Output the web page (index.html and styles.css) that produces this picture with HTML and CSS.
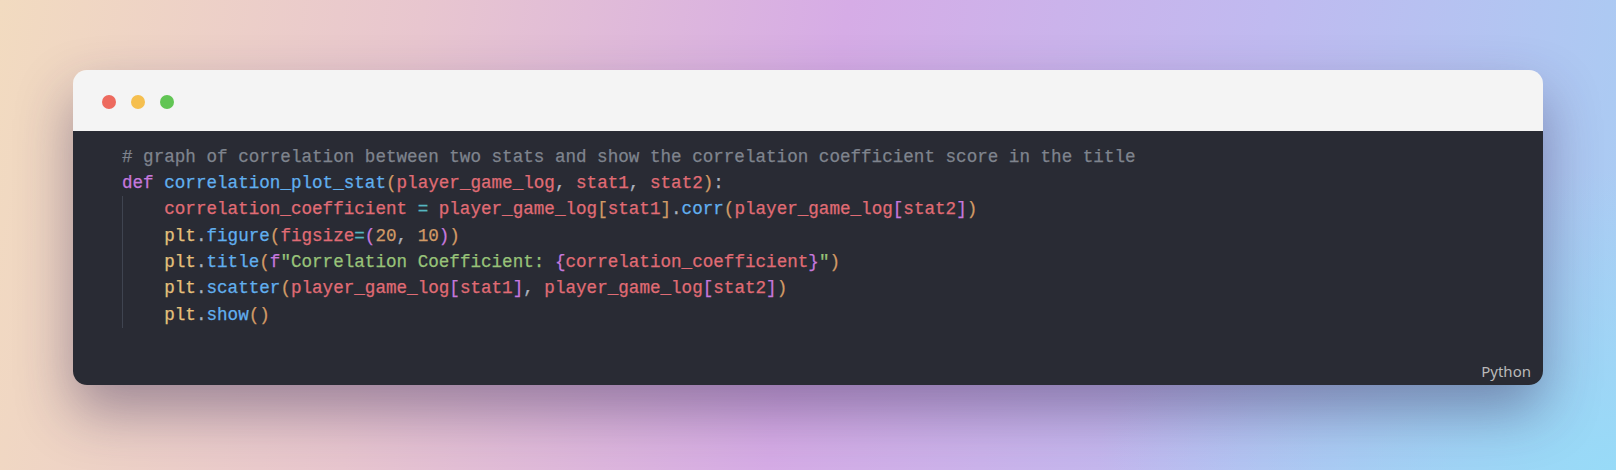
FILE: index.html
```html
<!DOCTYPE html>
<html lang="en">
<head>
<meta charset="utf-8">
<title>Code snippet</title>
<link rel="stylesheet" href="styles.css">
</head>
<body>
<div class="stage">
  <div class="window">
    <div class="titlebar">
      <span class="dot red"></span>
      <span class="dot yellow"></span>
      <span class="dot green"></span>
    </div>
    <div class="code-area">
      <pre class="code"><div class="line"><span class="c"># graph of correlation between two stats and show the correlation coefficient score in the title</span></div><div class="line"><span class="k">def</span> <span class="fn">correlation_plot_stat</span><span class="b1">(</span><span class="v">player_game_log</span><span class="p">,</span> <span class="v">stat1</span><span class="p">,</span> <span class="v">stat2</span><span class="b1">)</span><span class="p">:</span></div><div class="block"><div class="line"><span class="v">correlation_coefficient</span> <span class="op">=</span> <span class="v">player_game_log</span><span class="b1">[</span><span class="v">stat1</span><span class="b1">]</span><span class="p">.</span><span class="fn">corr</span><span class="b1">(</span><span class="v">player_game_log</span><span class="b2">[</span><span class="v">stat2</span><span class="b2">]</span><span class="b1">)</span></div><div class="line"><span class="m">plt</span><span class="p">.</span><span class="fn">figure</span><span class="b1">(</span><span class="v">figsize</span><span class="op">=</span><span class="b2">(</span><span class="n">20</span><span class="p">,</span> <span class="n">10</span><span class="b2">)</span><span class="b1">)</span></div><div class="line"><span class="m">plt</span><span class="p">.</span><span class="fn">title</span><span class="b1">(</span><span class="k">f</span><span class="s">"Correlation Coefficient: </span><span class="b2">{</span><span class="v">correlation_coefficient</span><span class="b2">}</span><span class="s">"</span><span class="b1">)</span></div><div class="line"><span class="m">plt</span><span class="p">.</span><span class="fn">scatter</span><span class="b1">(</span><span class="v">player_game_log</span><span class="b2">[</span><span class="v">stat1</span><span class="b2">]</span><span class="p">,</span> <span class="v">player_game_log</span><span class="b2">[</span><span class="v">stat2</span><span class="b2">]</span><span class="b1">)</span></div><div class="line"><span class="m">plt</span><span class="p">.</span><span class="fn">show</span><span class="b1">()</span></div></div></pre>
      <div class="lang">Python</div>
    </div>
  </div>
</div>
</body>
</html>
```

FILE: styles.css
```css
* { box-sizing: border-box; }

html, body {
  margin: 0;
  padding: 0;
  width: 1616px;
  height: 470px;
  overflow: hidden;
}

body {
  background:
    radial-gradient(ellipse 520px 300px at 1616px 470px, rgba(150, 220, 248, 0.9), rgba(150, 220, 248, 0) 100%),
    linear-gradient(100deg, #f2dbc0 0%, #e8c6cf 25%, #d6ace6 50%, #c0baf0 75%, #a8cdf3 100%);
  font-family: "Noto Sans", "Open Sans", sans-serif;
}

.stage {
  padding: 70px 73px 0 73px;
}

.window {
  width: 1470px;
  border-radius: 14px;
  overflow: hidden;
  box-shadow: 0 26px 55px rgba(50, 35, 80, 0.42);
}

.titlebar {
  height: 61px;
  background: #f4f4f4;
  display: flex;
  align-items: center;
  gap: 15px;
  padding-left: 29px;
  padding-top: 2px;
}

.dot {
  width: 14px;
  height: 14px;
  border-radius: 50%;
  display: block;
}
.red { background: #ed6a5e; }
.yellow { background: #f5bf4f; }
.green { background: #61c554; }

.code-area {
  height: 254px;
  background: #292b34;
  display: flex;
  flex-direction: column;
}

.code {
  margin: 0;
  padding: 12.5px 0 0 49px;
  font-family: "Liberation Mono", "DejaVu Sans Mono", monospace;
  font-size: 17.6px;
  line-height: 26.4px;
  color: #abb2bf;
  -webkit-text-stroke: 0.25px currentColor;
}

.line {
  height: 26.4px;
  white-space: pre;
}

.block {
  border-left: 1px solid #3f4450;
  padding-left: calc(4ch - 1px);
}

.c { color: #7f848e; }
.k { color: #c678dd; }
.fn { color: #61afef; }
.v { color: #e06c75; }
.p { color: #abb2bf; }
.op { color: #56b6c2; }
.m { color: #e5c07b; }
.n { color: #d19a66; }
.s { color: #98c379; }
.b1 { color: #d19a66; }
.b2 { color: #c678dd; }

.lang {
  margin-top: auto;
  align-self: flex-end;
  padding: 0 12px 4px 0;
  font-size: 15px;
  line-height: 20px;
  color: #b9b9b9;
}
```
